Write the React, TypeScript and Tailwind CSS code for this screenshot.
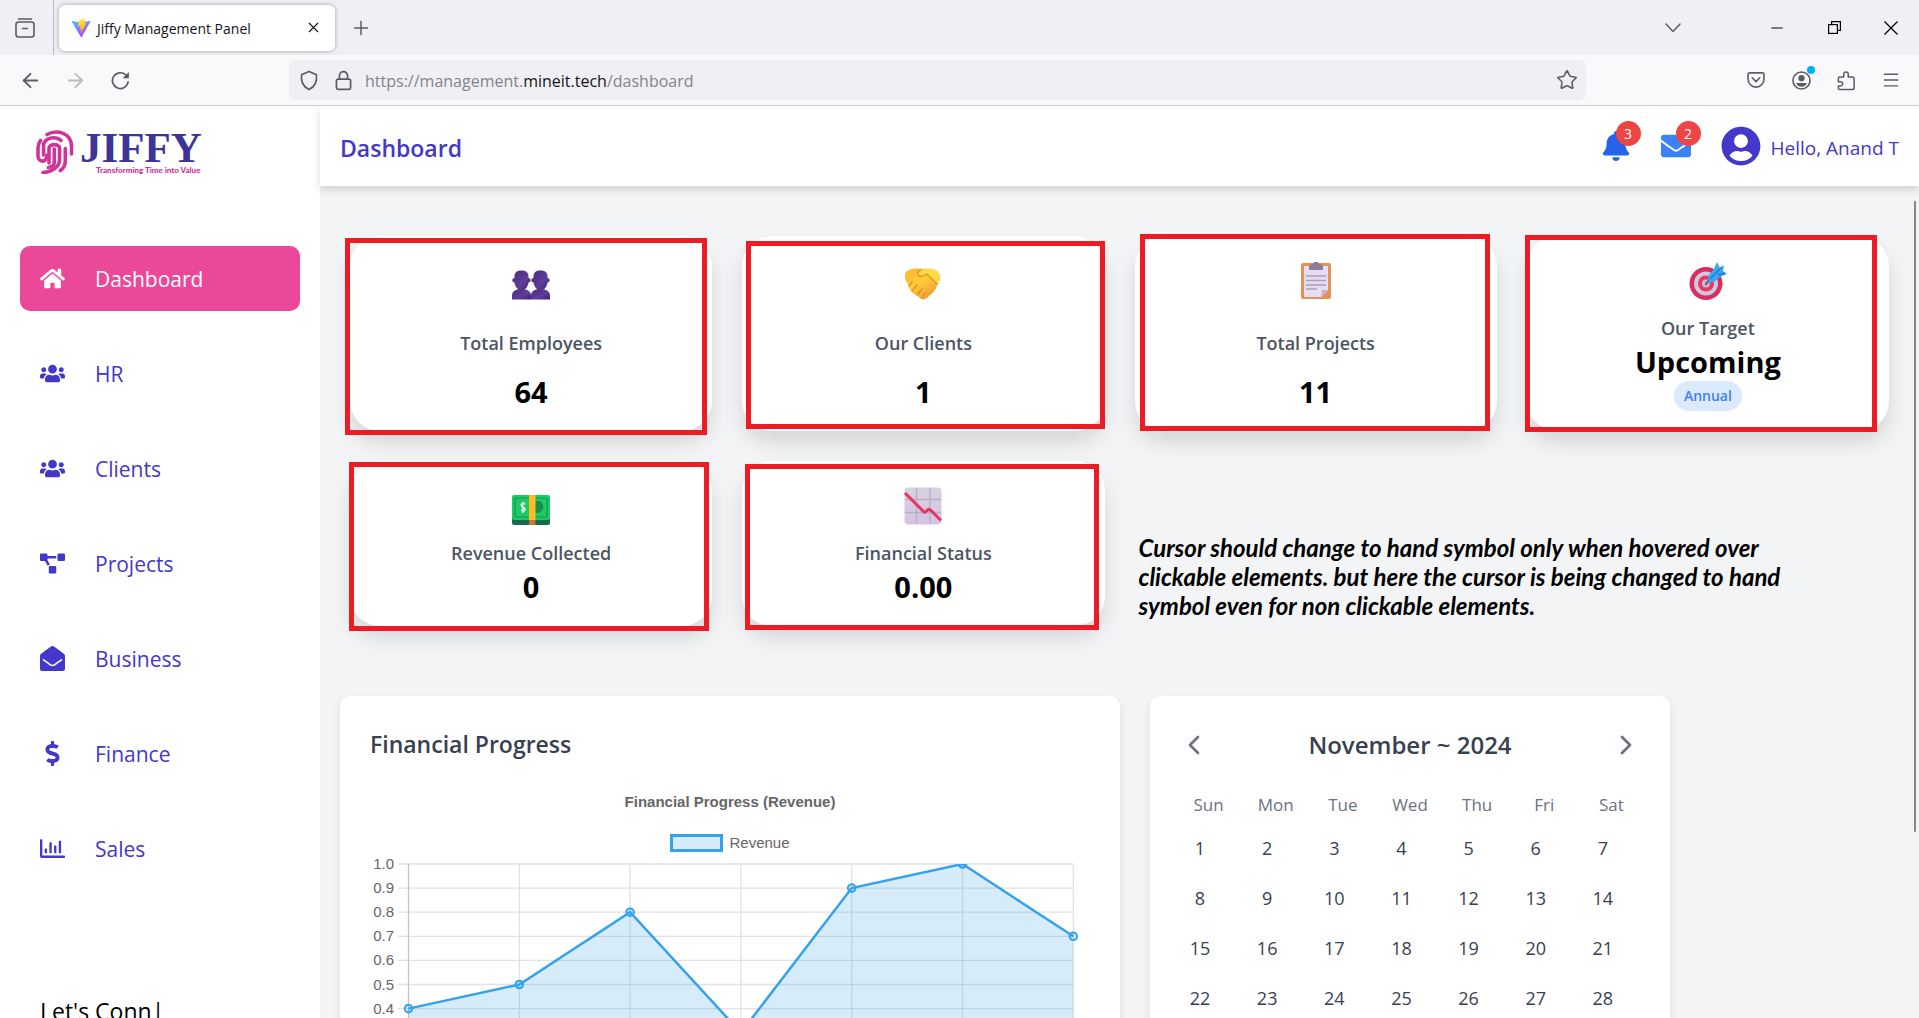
import React from "react";
import { FaHome, FaUsers, FaProjectDiagram, FaEnvelopeOpen, FaDollarSign, FaRegChartBar, FaBell, FaEnvelope, FaUserCircle } from "react-icons/fa";
import { ArrowLeft, ArrowRight, X, Plus, Star, Menu, ChevronLeft, ChevronRight, Minus } from "lucide-react";

const chromeBtn = "flex size-8 shrink-0 items-center justify-center";

function ViteLogo() {
  return (
    <svg viewBox="0 0 32 32" className="size-5" aria-hidden="true">
      <defs>
        <linearGradient id="va" x1="0" x2="0.6" y1="0" y2="1"><stop offset="0" stopColor="#41d1ff" /><stop offset="1" stopColor="#bd34fe" /></linearGradient>
        <linearGradient id="vb" x1="0.4" x2="0.6" y1="0" y2="1"><stop offset="0" stopColor="#ffea83" /><stop offset="0.2" stopColor="#ffdd35" /><stop offset="1" stopColor="#ffa800" /></linearGradient>
      </defs>
      <path fill="url(#va)" d="M30.9 5.8 17.2 30.3a.8.8 0 0 1-1.3 0L1.100 5.800c-.3-.6.200-1.300.9-1.100L16 7.200 30 4.700c.7-.100 1.200.5.9 1.100Z" />
      <path fill="url(#vb)" d="m22 1.200-9.400 1.800c-.2 0-.300.200-.3.300l-.6 9.800c0 .200.200.400.500.4l2.600-.6c.3-.100.500.200.4.400l-.8 3.800c0 .3.200.500.5.4l1.600-.5c.3 0 .5.200.5.5l-1.300 6c0 .4.500.600.7.3l8.100-15.600c.100-.3-.1-.6-.4-.5l-2.700.5c-.3 0-.5-.200-.4-.4l1.800-6.200c0-.200-.200-.5-.5-.4Z" />
    </svg>
  );
}

function TabStrip() {
  return (
    <div className="flex h-[55px] items-center bg-[#f0eff4]">
      <div className="flex h-full w-[54px] items-center justify-center border-r border-[#b9b8c0] pr-1">
        <button aria-label="View recent browsing">
          <svg viewBox="0 0 20 20" className="size-5" fill="none" stroke="#5b5b66" strokeWidth="1.600" strokeLinecap="round">
            <path d="M3.500 1h13" /><rect x="1" y="4" width="18" height="15" rx="2.500" /><path d="M7.500 10.500h5" />
          </svg>
        </button>
      </div>
      <div className="ml-[5px] flex h-[46px] w-[276px] items-center rounded-md bg-white pl-3 pr-2 shadow-[0_0_4px_rgba(0,0,0,0.35)]">
        <ViteLogo />
        <span className="ml-[6px] flex-1 whitespace-nowrap pt-[2px] text-[14px] text-[#15141a]">Jiffy Management Panel</span>
        <button aria-label="Close tab" className="flex size-7 items-center justify-center text-[#15141a]"><X size={17} strokeWidth={1.600} /></button>
      </div>
      <button aria-label="New tab" className="ml-[14px] flex size-6 items-center justify-center text-[#5b5b66]"><Plus size={22} strokeWidth={1.600} /></button>
      <div className="flex-1" />
      <button aria-label="List all tabs" className={chromeBtn + " mr-[72px] text-[#5b5b66]"}>
        <svg viewBox="0 0 16 10" className="h-[10px] w-4" fill="none" stroke="currentColor" strokeWidth="1.500" strokeLinecap="round" strokeLinejoin="round"><path d="m1 1 7 7.500L15 1" /></svg>
      </button>
      <div className="flex gap-[25px] pr-3 text-black">
        <button aria-label="Minimize" className={chromeBtn}><Minus size={18} strokeWidth={1.400} /></button>
        <button aria-label="Restore" className={chromeBtn}>
          <svg viewBox="0 0 13 13" className="size-[13px]" fill="none" stroke="currentColor" strokeWidth="1.200"><rect x="0.600" y="3.600" width="8.800" height="8.800" /><path d="M3.600 3.600v-3h8.800v8.800h-3" /></svg>
        </button>
        <button aria-label="Close window" className={chromeBtn}>
          <svg viewBox="0 0 14 14" className="size-[14px]" stroke="currentColor" strokeWidth="1.300"><path d="m.5.500 13 13m0-13-13 13" /></svg>
        </button>
      </div>
    </div>
  );
}

function Toolbar() {
  return (
    <div className="flex h-[51px] items-center border-b border-[#ccccd0] bg-[#f9f9fb] text-[#5b5b66]">
      <div className="flex w-[289px] shrink-0 gap-[13px] pl-[14px]">
        <button aria-label="Back" className={chromeBtn}><ArrowLeft size={23} strokeWidth={1.900} /></button>
        <button aria-label="Forward" className={chromeBtn + " text-[#bcbcc2]"}><ArrowRight size={23} strokeWidth={1.900} /></button>
        <button aria-label="Reload" className={chromeBtn}>
          <svg viewBox="0 0 20 20" className="size-[19px]" fill="none" stroke="currentColor" strokeWidth="1.800" strokeLinecap="round"><path d="M18 11.500A8.300 8.300 0 1 1 15.600 4.200" /><path d="M18.800 1v6.500h-6.500Z" fill="currentColor" stroke="none" /></svg>
        </button>
      </div>
      <div className="flex h-10 flex-1 items-center rounded-md bg-[#f0eff4] pl-[9px] pr-[5px]">
        <svg viewBox="0 0 20 22" className="h-[21px] w-[22px]" fill="none" stroke="currentColor" strokeWidth="1.700" strokeLinejoin="round"><path d="M10 1.500 17.800 5c.8 6.500-1.500 12.500-7.800 15.500C3.700 17.500 1.400 11.500 2.200 5Z" /></svg>
        <svg viewBox="0 0 18 22" className="ml-[15px] h-[21px] w-[17px]" fill="none" stroke="currentColor" strokeWidth="1.800"><rect x="1.500" y="9.500" width="15" height="11" rx="2" /><path d="M4.700 9.500V6a4.300 4.300 0 0 1 8.600 0v3.500" /></svg>
        <span className="ml-[13px] flex-1 whitespace-nowrap pt-[2px] text-[16px] text-[#84838b]">https://management.<span className="text-[#15141a]">mineit.tech</span>/dashboard</span>
        <button aria-label="Bookmark this page" className="flex size-7 items-center justify-center"><Star size={22} strokeWidth={1.700} /></button>
      </div>
      <div className="ml-[154px] flex gap-[13px] pr-3">
        <button aria-label="Save to Pocket" className={chromeBtn}>
          <svg viewBox="0 0 20 18" className="h-4 w-[18px]" fill="none" stroke="currentColor" strokeWidth="1.800" strokeLinecap="round" strokeLinejoin="round"><path d="M3 1h14a2 2 0 0 1 2 2v5a9 9 0 0 1-18 0V3a2 2 0 0 1 2-2Z" /><path d="m5.800 6.500 4.200 4.300 4.200-4.300" /></svg>
        </button>
        <button aria-label="Account" className={chromeBtn + " relative"}>
          <svg viewBox="0 0 20 20" className="size-[19px]" fill="none" stroke="currentColor" strokeWidth="1.700"><circle cx="10" cy="10" r="9" /><circle cx="10" cy="7.600" r="3.300" fill="currentColor" stroke="none" /><path d="M4.500 12.500h11c-.8 2.800-2.800 4-5.500 4s-4.700-1.200-5.500-4Z" fill="currentColor" stroke="none" /></svg>
          <span className="absolute right-[2px] top-[2px] size-2 rounded-full bg-[#00b3f4]" />
        </button>
        <button aria-label="Extensions" className={chromeBtn}>
          <svg viewBox="0 0 20 22" className="h-[21px] w-[18px]" fill="none" stroke="currentColor" strokeWidth="1.700" strokeLinejoin="round"><path d="M3 7h4.500V4a2.500 2.500 0 0 1 5 0v3H17a2 2 0 0 1 2 2v10a2 2 0 0 1-2 2H3a1.500 1.500 0 0 1-1.500-1.500V17H4a2.300 2.300 0 0 0 0-4.600H1.500V8.500A1.500 1.500 0 0 1 3 7Z" /></svg>
        </button>
        <button aria-label="Menu" className={chromeBtn}><Menu size={20} strokeWidth={1.700} /></button>
      </div>
    </div>
  );
}

function Logo() {
  return (
    <div className="flex h-[52px] gap-[6px] pl-[36px]">
      <svg viewBox="0 0 38 44" className="h-11 w-[38px] shrink-0" fill="none" stroke="#cf3399" strokeWidth="3.600" strokeLinecap="round" aria-hidden="true">
        <path d="M11 4.500C21-1 35.500 3 35.500 16v8" />
        <path d="M4.500 10.500C2.500 13 2 15 2 18v8c0 6 8.500 8 9-1" />
        <path d="M7.500 14C10 7 20 6 25 10.500" />
        <path d="M7.600 14v11" />
        <path d="M13 33V18c0-4.500 10.500-4.500 10.500 0v12c0 7-8 12-16.500 12.500" />
        <path d="M18.300 19v13c0 3-2.500 5-6 5.500" />
        <path d="M29.300 18.500V31c0 5-2 7.500-5 9.500" />
      </svg>
      <div className="flex flex-col">
        <span className="font-['Liberation_Serif',serif] text-[43px] font-bold leading-[35px] text-[#3d3399]">JIFFY</span>
        <span className="whitespace-nowrap pl-4 font-['Lato',sans-serif] text-[8px] font-black leading-[10px] text-[#cf2f98]">Transforming Time into Value</span>
      </div>
    </div>
  );
}

const navItems = [
  { label: "Dashboard", Icon: FaHome },
  { label: "HR", Icon: FaUsers },
  { label: "Clients", Icon: FaUsers },
  { label: "Projects", Icon: FaProjectDiagram },
  { label: "Business", Icon: FaEnvelopeOpen },
  { label: "Finance", Icon: FaDollarSign },
  { label: "Sales", Icon: FaRegChartBar },
];

function Sidebar() {
  return (
    <aside className="flex w-80 shrink-0 flex-col bg-white pt-6 shadow-[0_4px_8px_rgba(0,0,0,0.12)]">
      <div className="h-[116px] shrink-0"><Logo /></div>
      <nav className="flex shrink-0 flex-col gap-[30px] px-5">
        {navItems.map(({ label, Icon }, i) => (
          <a key={label} href={"#" + label.toLowerCase()} className={"flex h-[65px] shrink-0 items-center rounded-[10px] px-5 text-[21px] " + (i === 0 ? "bg-[#ec4899] text-white" : "text-[#4338ca]")}>
            <Icon size={25} />
            <span className="ml-[30px] pt-[2px]">{label}</span>
          </a>
        ))}
      </nav>
      <p className="mt-[113px] shrink-0 pl-10 text-[23px] leading-[34px] text-black">Let's Conn|</p>
    </aside>
  );
}

const badge = "absolute -right-[10px] -top-[10px] flex size-[25px] items-center justify-center rounded-full bg-[#ef4444] text-[14px] text-white";

function Header() {
  return (
    <header className="z-10 flex h-20 shrink-0 items-center bg-white px-5 shadow-[0_4px_8px_rgba(0,0,0,0.14)]">
      <h1 className="flex-1 pt-1 text-[23px] font-semibold text-[#4338ca]">Dashboard</h1>
      <button aria-label="Notifications" className="relative text-[#2563eb]"><FaBell size={30} /><span className={badge}>3</span></button>
      <button aria-label="Messages" className="relative ml-[30px] text-[#3b82f6]"><FaEnvelope size={30} /><span className={badge}>2</span></button>
      <button className="ml-[30px] flex items-center gap-[10px] whitespace-nowrap text-[19px] text-[#4338ca]"><FaUserCircle size={40} /><span className="pt-1">Hello, Anand T</span></button>
    </header>
  );
}

function PeopleIcon() {
  return (
    <svg viewBox="0 0 40 40" className="size-10" aria-hidden="true">
      <defs><linearGradient id="pp" x1="0" y1="0" x2="1" y2="1"><stop offset="0" stopColor="#4c2a7a" /><stop offset="0.600" stopColor="#5f3d9b" /><stop offset="1" stopColor="#3d2063" /></linearGradient></defs>
      <g fill="url(#pp)">
        <path d="M3.500 21.500a2.200 2.200 0 0 1 0-4.400C3.200 12 5 9.500 10.500 9.500s7.300 2.500 7 7.600a2.200 2.200 0 0 1 0 4.400c-.7 4-2.500 7.500-7 7.500s-6.300-3.500-7-7.500Z" />
        <path d="M22.500 21.500a2.200 2.200 0 0 1 0-4.400c-.3-5.100 1.500-7.600 7-7.600s7.300 2.500 7 7.600a2.200 2.200 0 0 1 0 4.400c-.7 4-2.500 7.500-7 7.500s-6.300-3.500-7-7.500Z" />
        <path d="M1 38.500v-4C1 30.500 4.500 28 10.500 28s9.500 2.500 9.500 6.500v4Z" />
        <path d="M20 38.500v-4c0-4 3.500-6.500 9.500-6.500s9.500 2.500 9.500 6.500v4Z" />
      </g>
    </svg>
  );
}

function HandshakeIcon() {
  return (
    <svg viewBox="0 -3 40 40" className="size-10" aria-hidden="true">
      <defs><linearGradient id="hs" x1="0" y1="0" x2="0.700" y2="1"><stop offset="0" stopColor="#fcb62c" /><stop offset="0.500" stopColor="#ffca38" /><stop offset="1" stopColor="#ee9a35" /></linearGradient></defs>
      <path d="M3 8c4-4 10-4 15-3 6-1 14-1 17 3 4 5 2 9-1 13-1 5-4 8-8 11-4 5-8 4-11 0-5-2-9-6-10-12-3-3-4-8-2-12Z" fill="url(#hs)" />
      <path d="M35 8c3 5 2 9 0 12L24 10c-3 2-7 3-9 1 2-4 6-6 10-6 4 0 8 0 10 3Z" fill="#ffdb48" />
      <path d="M15 11c2 2 6 1 9-1l10 10M18 5c-3 1-4 4-3 6M6 22l3-4M9 27l5-6M14 31l5-6M19 34l3-5" fill="none" stroke="#e58f20" strokeWidth="1.300" strokeLinecap="round" />
    </svg>
  );
}

function ClipboardIcon() {
  return (
    <svg viewBox="0 0 40 40" className="size-10" aria-hidden="true">
      <rect x="5" y="2" width="30" height="36" rx="2.500" fill="#e59257" />
      <path d="M8 5h24v24l-7 7H8Z" fill="#e7dcf3" />
      <path d="M32 29h-6l-1 7Z" fill="#c3b4d4" />
      <path d="M10 15h20M10 19.500h20M10 24h20M10 28h11" stroke="#aaa0b4" strokeWidth="1.700" />
      <path d="M13 9V6c0-2 1-3 4-3 0-3 6-3 6 0 3 0 4 1 4 3v3Z" fill="#8a7d97" />
    </svg>
  );
}

function TargetIcon() {
  return (
    <svg viewBox="0 0 40 40" className="size-10" aria-hidden="true">
      <circle cx="18" cy="22.500" r="16.500" fill="#d5305f" />
      <circle cx="18" cy="22.500" r="12" fill="#d3c6df" />
      <circle cx="18" cy="22.500" r="8" fill="#e83763" />
      <circle cx="18" cy="22.500" r="4" fill="#c9bdd6" />
      <path d="m18 23 6-7" stroke="#75617f" strokeWidth="2.500" strokeLinecap="round" />
      <path d="m20 15 6-7 3-7 3 6 4-3-1 6 4 3-7 3-6 5-5 1Z" fill="#3aa9f2" />
      <path d="m22 18 12-12M30 14l7-2" stroke="#1f78d8" strokeWidth="1.500" />
    </svg>
  );
}

function MoneyIcon() {
  return (
    <svg viewBox="0 -4 40 40" className="size-10" aria-hidden="true">
      <rect x="1" y="6" width="38" height="29" rx="2" fill="#156b4d" />
      <rect x="1" y="5" width="38" height="25" rx="2" fill="#1fc965" />
      <rect x="4" y="8" width="32" height="19" rx="1" fill="none" stroke="#15984f" strokeWidth="1.200" />
      <path d="M24 11c11-2 11 13 0 12Z" fill="#178d50" />
      <path d="M14.500 14.300c-3-2.400-6 .7-3 2.700 4 1.500 3 5.500-1.500 3.200M11.700 12v11" fill="none" stroke="#e5efe8" strokeWidth="1.500" />
      <rect x="18" y="5" width="6.500" height="25" fill="#ffbd25" />
      <rect x="18" y="30" width="6.500" height="5" fill="#c77535" />
    </svg>
  );
}

function TrendIcon() {
  return (
    <svg viewBox="0 0 40 40" className="size-10" aria-hidden="true">
      <defs><linearGradient id="tr" x1="0" y1="0" x2="0" y2="1"><stop offset="0" stopColor="#d8d2df" /><stop offset="1" stopColor="#d5c3e4" /></linearGradient></defs>
      <rect x="1.500" y="1.500" width="37" height="37" rx="4" fill="url(#tr)" />
      <path d="M13.500 2v36M27 2v36M2 13.500h36M2 26.500h36" stroke="#b9b0c3" strokeWidth="1.400" />
      <path d="m2 7 18.500 18.500c1.500 1.500 2 .8 3.500-1s2.500-1.500 4 0l10 10" fill="none" stroke="#ec3163" strokeWidth="3" />
    </svg>
  );
}

const cards = [
  { Icon: PeopleIcon, label: "Total Employees", value: "64", frame: "-left-[5px] right-[5px] top-[2px] -bottom-[4px]" },
  { Icon: HandshakeIcon, label: "Our Clients", value: "1", frame: "left-[4px] right-0 top-[5px] bottom-[2px]" },
  { Icon: ClipboardIcon, label: "Total Projects", value: "11", frame: "left-[5px] right-[7px] -top-[2px] bottom-0" },
  { Icon: TargetIcon, label: "Our Target", value: "Upcoming", tag: "Annual", frame: "-left-[2px] right-[12px] -top-[1px] -bottom-[1px]" },
  { Icon: MoneyIcon, label: "Revenue Collected", value: "0", compact: true, frame: "-left-[1px] right-[3px] top-[1px] -bottom-[5px]" },
  { Icon: TrendIcon, label: "Financial Status", value: "0.00", compact: true, frame: "left-[3px] right-[6px] top-[3px] -bottom-[4px]" },
];

function StatCards() {
  return (
    <section className="grid grid-cols-4 gap-[30px] px-[10px]">
      {cards.map(({ Icon, label, value, tag, compact, frame }) => {
        const tight = compact || tag;
        return (
          <article key={label} className={"relative flex flex-col items-center rounded-[30px] bg-white px-5 pt-[25px] shadow-[0_12px_20px_rgba(0,0,0,0.12)] " + (compact ? "h-[165px]" : "h-[195px]")}>
            <Icon />
            <h2 className={"text-[18px] font-semibold leading-[30px] text-[#4b5563] " + (tight ? "mt-[12px]" : "mt-[27px]")}>{label}</h2>
            <p className={"text-[29px] font-bold leading-[38px] text-black " + (tight ? "" : "mt-[15px]")}>{value}</p>
            {tag && <span className="rounded-full bg-[#dbeafe] px-[10px] text-[14px] font-semibold leading-[30px] text-[#3b82f6]">{tag}</span>}
            <span className={"pointer-events-none absolute border-[5px] border-[#ed1c24] " + frame} />
          </article>
        );
      })}
      <p className="col-span-2 mt-[72px] whitespace-nowrap pl-1 font-['Lato',sans-serif] text-[24px] font-bold italic leading-[29px] text-black">
        Cursor should change to hand symbol only when hovered over<br />clickable elements. but here the cursor is being changed to hand<br />symbol even for non clickable elements.
      </p>
    </section>
  );
}

const revenue = [0.4, 0.5, 0.8, 0.3, 0.9, 1.0, 0.7];
const px = (i: number) => 38.5 + i * 110.8;
const py = (v: number) => 10 + (1 - v) * 241;

function RevenueChart() {
  const line = revenue.map((v, i) => `${px(i)},${py(v)}`).join(" ");
  return (
    <section className="h-[420px] w-[780px] rounded-[10px] bg-white p-[30px] shadow-[0_4px_8px_rgba(0,0,0,0.1)]">
      <h2 className="text-[23px] font-semibold leading-[37px] text-[#374151]">Financial Progress</h2>
      <div className="mt-[28px] flex flex-col items-center font-['Liberation_Sans',sans-serif] text-[15px] text-[#666]">
        <h3 className="font-bold leading-[22px]">Financial Progress (Revenue)</h3>
        <div className="mt-[19px] flex items-center gap-[6px] leading-[22px]"><span className="h-[18px] w-[53px] border-[3px] border-[#36a2eb] bg-[#d7ecfb]" />Revenue</div>
      </div>
      <svg viewBox="0 0 720 270" className="h-[270px] w-[720px] overflow-visible" role="img" aria-label="Revenue chart">
        <clipPath id="area"><rect x="30" y="10" width="690" height="260" /></clipPath>
        {[1, 0.9, 0.8, 0.7, 0.6, 0.5, 0.4, 0.3].map((v) => (
          <g key={v}>
            <path d={`M28 ${py(v)}H703`} stroke="#e2e2e2" strokeWidth="1.300" />
            {v > 0.35 && <text x="24" y={py(v) + 5} textAnchor="end" fontSize="15" fill="#666" fontFamily="Liberation Sans, sans-serif">{v.toFixed(1)}</text>}
          </g>
        ))}
        {revenue.map((_, i) => <path key={i} d={`M${px(i)} 10V251`} stroke={i === 0 ? "#c4c4c4" : "#e2e2e2"} strokeWidth="1.300" />)}
        <g clipPath="url(#area)">
          <polygon points={`${px(0)},251 ${line} ${px(6)},251`} fill="#36a2eb" fillOpacity="0.2" />
          <polyline points={line} fill="none" stroke="#36a2eb" strokeWidth="2.500" />
          {revenue.map((v, i) => <circle key={i} cx={px(i)} cy={py(v)} r="3.800" fill="#36a2eb" fillOpacity="0.200" stroke="#36a2eb" strokeWidth="2" />)}
        </g>
      </svg>
    </section>
  );
}

const weekdays = ["Sun", "Mon", "Tue", "Wed", "Thu", "Fri", "Sat"];
const weeks = [0, 1, 2, 3].map((w) => weekdays.map((_, d) => w * 7 + d + 1));

function Calendar() {
  return (
    <section className="h-[420px] w-[520px] rounded-[10px] bg-white px-[25px] pt-[30px] shadow-[0_4px_8px_rgba(0,0,0,0.1)]">
      <div className="flex items-center justify-between px-[3px] text-[#6b7280]">
        <button aria-label="Previous month"><ChevronLeft size={32} strokeWidth={2} /></button>
        <h2 className="text-[24px] font-semibold leading-[37px] text-[#374151]">November ~ 2024</h2>
        <button aria-label="Next month"><ChevronRight size={32} strokeWidth={2} /></button>
      </div>
      <table className="mt-[23px] w-full table-fixed">
        <thead><tr>{weekdays.map((d) => <th key={d} className="h-[37px] p-0 text-center text-[17px] font-normal text-[#6b7280]">{d}</th>)}</tr></thead>
        <tbody>
          {weeks.map((week) => (
            <tr key={week[0]}>{week.map((d) => <td key={d} className="h-[50px] p-0"><button className="size-[50px] text-[18px] text-[#374151]">{d}</button></td>)}</tr>
          ))}
        </tbody>
      </table>
    </section>
  );
}

export default function App() {
  return (
    <div className="flex h-screen flex-col overflow-hidden bg-white font-['Open_Sans','Noto_Sans',sans-serif]">
      <TabStrip />
      <Toolbar />
      <div className="flex min-h-0 flex-1 overflow-hidden">
        <Sidebar />
        <div className="relative flex min-w-0 flex-1 flex-col bg-[#f3f4f6]">
          <Header />
          <main className="flex flex-col gap-[70px] px-5 pt-[50px]">
            <StatCards />
            <div className="flex items-start gap-[30px]">
              <RevenueChart />
              <Calendar />
            </div>
          </main>
          <span className="absolute right-[3px] top-[95px] h-[631px] w-[2px] rounded-full bg-[#85858a]" />
        </div>
      </div>
    </div>
  );
}
